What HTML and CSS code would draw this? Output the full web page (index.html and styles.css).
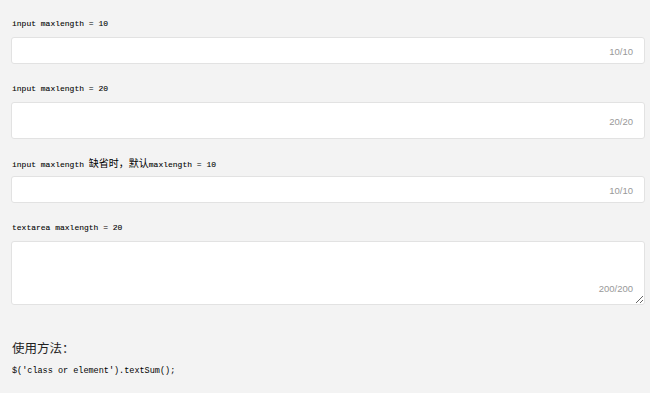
FILE: index.html
```html
<!DOCTYPE html>
<html lang="zh-CN">
<head>
    <meta charset="UTF-8">
    <title>textSum</title>
    <link rel="stylesheet" href="styles.css">
</head>
<body>
    <div class="page">
        <div class="field">
            <p class="label">input maxlength = 10</p>
            <div class="box">
                <input class="text" type="text" maxlength="10">
                <span class="count">10/10</span>
            </div>
        </div>

        <div class="field tight">
            <p class="label">input maxlength = 20</p>
            <div class="box">
                <input class="text tall" type="text" maxlength="20">
                <span class="count">20/20</span>
            </div>
        </div>

        <div class="field">
            <p class="label">input maxlength <span class="cn">缺省时，默认</span>maxlength = 10</p>
            <div class="box">
                <input class="text" type="text">
                <span class="count">10/10</span>
            </div>
        </div>

        <div class="field">
            <p class="label">textarea maxlength = 20</p>
            <div class="box">
                <textarea class="area" maxlength="200"></textarea>
                <span class="count bottom">200/200</span>
            </div>
        </div>

        <h3 class="usage">使用方法：</h3>
        <p class="code">$('class or element').textSum();</p>
    </div>
</body>
</html>
```

FILE: styles.css
```css
* {
    box-sizing: border-box;
}

body {
    margin: 0;
    background: #f3f3f3;
    color: #111;
    font-family: "Liberation Mono", monospace;
}

.page {
    padding: 18px 0 0 11px;
    width: 645px;
}

.field {
    margin-bottom: 19px;
}

.field.tight {
    margin-bottom: 18px;
}

.label {
    margin: 0 0 7px 1px;
    font-size: 8px;
    line-height: 12px;
    height: 12px;
    color: #000;
    -webkit-text-stroke: 0.08px #000;
}

.label .cn {
    font-family: "Noto Sans CJK SC", sans-serif;
    font-size: 10px;
    -webkit-text-stroke: 0;
}

.box {
    position: relative;
}

.text,
.area {
    display: block;
    width: 100%;
    background: #fff;
    border: 1px solid #e2e2e2;
    border-radius: 3px;
    outline: none;
    font-family: "Liberation Sans", sans-serif;
}

.text {
    height: 27px;
}

.text.tall {
    height: 37px;
}

.area {
    height: 64px;
    resize: vertical;
}

.count {
    position: absolute;
    right: 12px;
    top: 50%;
    transform: translateY(-50%);
    font-family: "Liberation Sans", sans-serif;
    font-size: 9.5px;
    color: #999;
}

.count.bottom {
    top: auto;
    bottom: 11px;
    transform: none;
}

.usage {
    margin: 35px 0 0 1px;
    font-family: "Noto Sans CJK SC", sans-serif;
    font-size: 12.5px;
    font-weight: normal;
    line-height: 16px;
    color: #222;
}

.code {
    margin: 9px 0 0 1px;
    font-size: 8.5px;
    line-height: 12px;
    color: #000;
}
```
